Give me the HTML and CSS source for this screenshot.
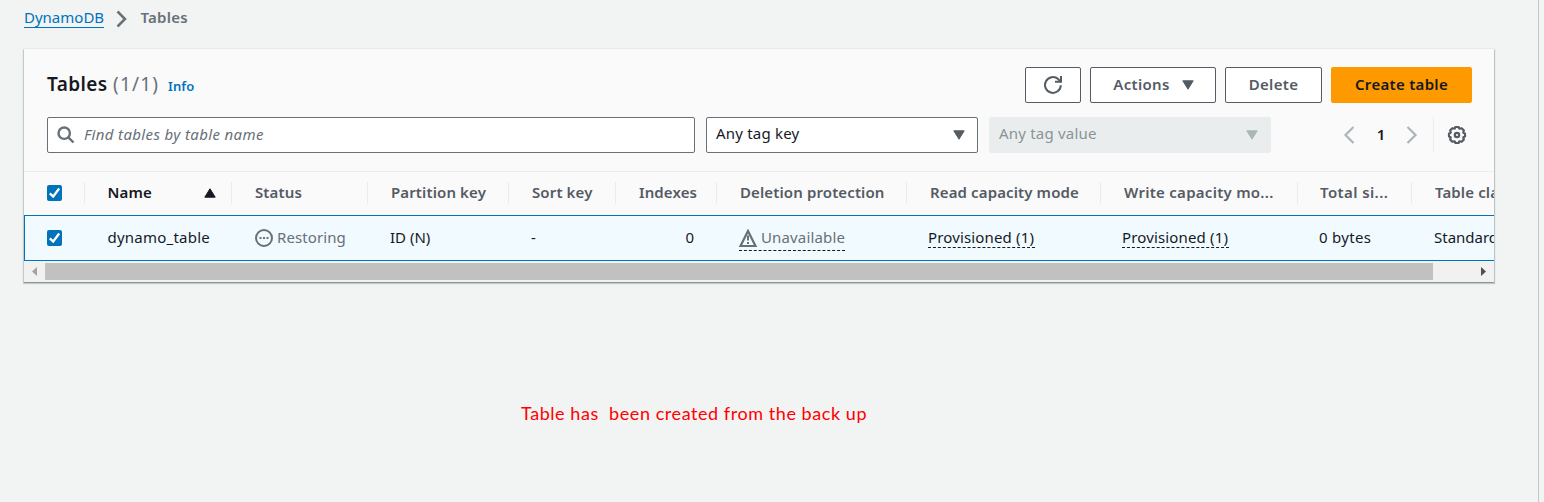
FILE: index.html
```html
<!DOCTYPE html>
<html lang="en">
<head>
<meta charset="utf-8">
<title>DynamoDB Tables</title>
<link rel="stylesheet" href="styles.css">
</head>
<body>
<div class="page">
  <nav class="crumbs">
    <a class="crumb-link">DynamoDB</a>
    <svg class="crumb-sep" width="12" height="18" viewBox="0 0 12 18"><path d="M1.500 1.500 9 9 1.500 16.500" fill="none" stroke="#687078" stroke-width="2.500"/></svg>
    <span class="crumb-current">Tables</span>
  </nav>
  <section class="panel">
    <header class="panel-head">
      <h1 class="title">Tables</h1>
      <span class="count">(1/1)</span>
      <a class="info">Info</a>
      <div class="actions">
        <button class="btn btn-refresh"><svg width="20" height="20" viewBox="0 0 20 20" fill="none" stroke="#545b64" stroke-width="2"><path d="M17.800 10.200a7.900 7.900 0 1 1-2.600-6.100l2 2.100"/><path d="M18 1v5.800h-6"/></svg></button>
        <button class="btn btn-actions"><span>Actions</span><svg width="12" height="10" viewBox="0 0 12 10"><path d="M.8.8h10.400L6 9.200z" fill="#545b64" stroke="#545b64" stroke-linejoin="round"/></svg></button>
        <button class="btn btn-delete"><span>Delete</span></button>
        <button class="btn btn-create"><span>Create table</span></button>
      </div>
    </header>
    <div class="filters">
      <div class="search">
        <svg width="18" height="18" viewBox="0 0 18 18" fill="none" stroke="#687078" stroke-width="2.400"><circle cx="7.200" cy="7.200" r="5.700"/><path d="m11.300 11.300 5.200 5.200"/></svg>
        <span class="placeholder">Find tables by table name</span>
      </div>
      <div class="select select-key"><span class="key-text">Any tag key</span><svg width="12" height="10" viewBox="0 0 12 10"><path d="M.8.8h10.400L6 9.200z" fill="#545b64" stroke="#545b64" stroke-linejoin="round"/></svg></div>
      <div class="select select-value"><span class="value-text">Any tag value</span><svg width="12" height="10" viewBox="0 0 12 10"><path d="M.8.8h10.400L6 9.200z" fill="#aab7b8" stroke="#aab7b8" stroke-linejoin="round"/></svg></div>
      <div class="pager">
        <svg width="12" height="18" viewBox="0 0 12 18"><path d="M10.500 1 2.500 9l8 8" fill="none" stroke="#aab7b8" stroke-width="2.200"/></svg>
        <span class="page-number">1</span>
        <svg width="12" height="18" viewBox="0 0 12 18"><path d="m1.500 1 8 8-8 8" fill="none" stroke="#aab7b8" stroke-width="2.200"/></svg>
      </div>
      <div class="settings">
        <svg width="20" height="20" viewBox="0 0 20 20" fill="none" stroke="#545b64" stroke-width="2.200"><path stroke-linejoin="round" d="M8.400 2h3.200l.7 1.700 2.300-.5 2.200 2.200-.5 2.300 1.700.7v3.200l-1.700.7.5 2.300-2.200 2.200-2.300-.5-.7 1.700H8.400l-.7-1.700-2.300.5-2.200-2.200.5-2.300-1.700-.7V8.400l1.700-.7-.5-2.300 2.200-2.200 2.300.5z"/><circle cx="10" cy="10" r="2.200"/></svg>
      </div>
    </div>
    <div class="table">
      <div class="row head-row">
        <div class="cell check-cell"><span class="check"><svg width="15" height="16" viewBox="0 0 15 16"><path d="m2.800 8.300 3.400 3.200 6-8" fill="none" stroke="#fff" stroke-width="2.300"/></svg></span></div>
        <div class="cell name-head"><span>Name</span><svg width="12" height="10" viewBox="0 0 12 10"><path d="M.8 9.200h10.400L6 .8z" fill="#16191f" stroke="#16191f" stroke-linejoin="round"/></svg></div>
        <div class="cell">Status</div>
        <div class="cell">Partition key</div>
        <div class="cell">Sort key</div>
        <div class="cell">Indexes</div>
        <div class="cell">Deletion protection</div>
        <div class="cell">Read capacity mode</div>
        <div class="cell head-write">Write capacity mo...</div>
        <div class="cell head-size">Total si...</div>
        <div class="cell">Table class</div>
      </div>
      <div class="row body-row">
        <div class="cell check-cell"><span class="check"><svg width="15" height="16" viewBox="0 0 15 16"><path d="m2.800 8.300 3.400 3.200 6-8" fill="none" stroke="#fff" stroke-width="2.300"/></svg></span></div>
        <div class="cell cell-name">dynamo_table</div>
        <div class="cell cell-status"><svg width="18" height="18" viewBox="0 0 18 18"><circle cx="9" cy="9" r="8" fill="none" stroke="#687078" stroke-width="2"/><path d="M4.500 8h2v2h-2zm3.500 0h2v2H8zm3.500 0h2v2h-2z" fill="#687078"/></svg><span>Restoring</span></div>
        <div class="cell">ID (N)</div>
        <div class="cell">-</div>
        <div class="cell cell-number">0</div>
        <div class="cell"><span class="hint hint-warn"><svg width="18" height="18" viewBox="0 0 18 18"><path d="M9 2 1.500 17h15z" fill="none" stroke="#687078" stroke-width="2.200"/><path d="M9 6.500v5M9 13v2" stroke="#687078" stroke-width="2"/></svg><span>Unavailable</span></span></div>
        <div class="cell cell-mode"><span class="hint">Provisioned (1)</span></div>
        <div class="cell cell-mode"><span class="hint">Provisioned (1)</span></div>
        <div class="cell cell-size">0 bytes</div>
        <div class="cell">Standard</div>
      </div>
    </div>
    <div class="scrollbar">
      <svg width="21" height="17" viewBox="0 0 21 17"><path d="M13 4v9L8 8.500z" fill="#a3a3a3"/></svg>
      <div class="thumb"></div>
      <svg class="scroll-right" width="21" height="17" viewBox="0 0 21 17"><path d="M8 4v9l5-4.500z" fill="#505050"/></svg>
    </div>
  </section>
  <p class="note">Table has&nbsp; been created from the back up</p>
</div>
</body>
</html>
```
FILE: styles.css
```css
* { box-sizing: border-box; }
body {
  margin: 0;
  background: #f2f3f3;
  font-family: "Noto Sans", sans-serif;
  font-size: 15px;
  color: #16191f;
}
svg { display: block; flex: none; }
.page {
  width: 1539px;
  height: 502px;
  border-right: 1px solid #c4c8c9;
  padding-left: 24px;
  overflow: hidden;
}
.crumbs { display: flex; height: 49px; padding-top: 7px; align-items: flex-start; white-space: nowrap; }
.crumb-link { width: 80px; height: 21px; line-height: 20px; border-bottom: 1px solid #0073bb; color: #0073bb; }
.crumb-sep { margin: 3px 0 0 12px; }
.crumb-current { margin-left: 12.500px; line-height: 20px; font-weight: 600; color: #687078; letter-spacing: .25px; }
.panel {
  width: 1470px;
  height: 233px;
  background: #fafafa;
  box-shadow: 0 1px 0 0 #879596, 1px 1px 0 0 #bcc5c6, -1px 1px 0 0 #c4caca, 0 0 0 1px #e6eaea, 0 1px 1px 1px #c4caca;
}
.panel-head { display: flex; height: 68px; padding: 18px 22px 0 23px; align-items: flex-start; white-space: nowrap; }
.title { margin: 0; width: 66px; font-size: 19px; font-weight: 600; line-height: 35px; letter-spacing: .4px; }
.count { width: 55px; font-size: 19px; line-height: 35px; color: #687078; letter-spacing: 1.200px; }
.info { font-size: 13px; font-weight: 600; line-height: 38px; color: #0073bb; letter-spacing: .1px; }
.actions { margin-left: auto; display: flex; gap: 9px; }
.btn {
  height: 36px; padding: 0; border: 1px solid #545b64; border-radius: 2px; background: #fff;
  display: flex; align-items: center; justify-content: center;
  font: 600 15px/32px "Noto Sans", sans-serif; letter-spacing: .3px; color: #545b64;
}
.btn span { padding-bottom: 2px; }
.btn-refresh { width: 56px; }
.btn-actions { width: 126px; gap: 12px; padding-left: 1px; }
.btn-delete { width: 97px; }
.btn-create { width: 141px; border-color: #f90; background: #f90; color: #16191f; }
.filters { display: flex; height: 54px; padding-left: 23px; white-space: nowrap; }
.search { display: flex; align-items: center; width: 648px; height: 36px; border: 1px solid #687078; border-radius: 2px; background: #fff; padding-left: 9px; gap: 9px; }
.placeholder { font-style: italic; color: #687078; line-height: 32px; padding-bottom: 2px; letter-spacing: .36px; }
.select { display: flex; justify-content: space-between; height: 36px; border: 1px solid #687078; border-radius: 2px; background: #fff; padding: 0 12px 0 9px; line-height: 31px; letter-spacing: .2px; }
.select svg { margin-top: 12px; }
.select-key { width: 272px; margin-left: 11px; }
.select-value { width: 282px; margin-left: 11px; border-color: #eaeded; background: #eaeded; color: #879596; }
.pager { display: flex; width: 162px; height: 36px; padding-left: 72px; align-items: center; }
.page-number { width: 51px; padding-left: 1px; text-align: center; font-weight: 600; padding-bottom: 3px; }
.settings { border-left: 1px solid #eaeded; height: 36px; padding: 8px 0 0 13px; }
.table { border-top: 1px solid #eaeded; overflow: hidden; }
.row { display: grid; grid-template-columns: 61px 147px 136px 141px 107px 101px 190px 194px 197px 114px 82px; white-space: nowrap; }
.cell { padding-left: 23px; overflow: hidden; }
.head-row { height: 43px; padding-top: 10px; font-weight: 600; color: #545b64; line-height: 20px; letter-spacing: .12px; }
.head-row .cell { height: 22px; border-right: 1px solid #eaeded; }
.head-row .cell:last-child { border-right: 0; }
.head-row .head-write { letter-spacing: .27px; }
.head-row .head-size { padding-left: 22px; letter-spacing: .4px; }
.check { display: block; width: 15px; height: 16px; background: #0073bb; border-radius: 2px; }
.head-row .check { margin-top: 3px; }
.head-row .name-head { display: flex; justify-content: space-between; padding: 0 15px 0 22.500px; color: #16191f; }
.name-head svg { margin-top: 6px; }
.body-row { height: 46px; border: 1px solid #0073bb; border-right: 0; background: #f1faff; line-height: 42px; }
.body-row .cell { padding-left: 21px; }
.body-row .check-cell { padding-left: 22px; }
.body-row .check { margin-top: 14px; }
.body-row .cell-name { padding-left: 21.500px; letter-spacing: .23px; }
.body-row .cell-status { display: flex; align-items: center; gap: 4px; padding-left: 22px; color: #687078; letter-spacing: .1px; }
.cell-status span { padding-bottom: 2px; }
.body-row .cell-number { text-align: right; padding-right: 24px; }
.body-row .cell-mode, .body-row .cell-size { padding-left: 20px; }
.cell-size { letter-spacing: .3px; }
.hint { letter-spacing: .15px; line-height: 19px; border-bottom: 1px dashed #16191f; }
.cell-mode .hint { display: block; width: 107px; height: 20px; margin-top: 12px; }
.hint-warn { display: flex; width: 106px; height: 23px; margin-top: 12px; gap: 4px; color: #687078; line-height: 18px; }
.hint-warn svg { margin-top: 1px; }
.scrollbar { display: flex; height: 21px; padding-top: 2px; background: #f1f1f1; }
.thumb { width: 1388px; height: 17px; background: #c1c1c1; }
.scroll-right { margin-left: auto; }
.note { margin: 120px 0 0 497px; font-family: Lato, sans-serif; font-size: 18px; line-height: 22px; letter-spacing: .56px; color: #f00; white-space: nowrap; }
```
